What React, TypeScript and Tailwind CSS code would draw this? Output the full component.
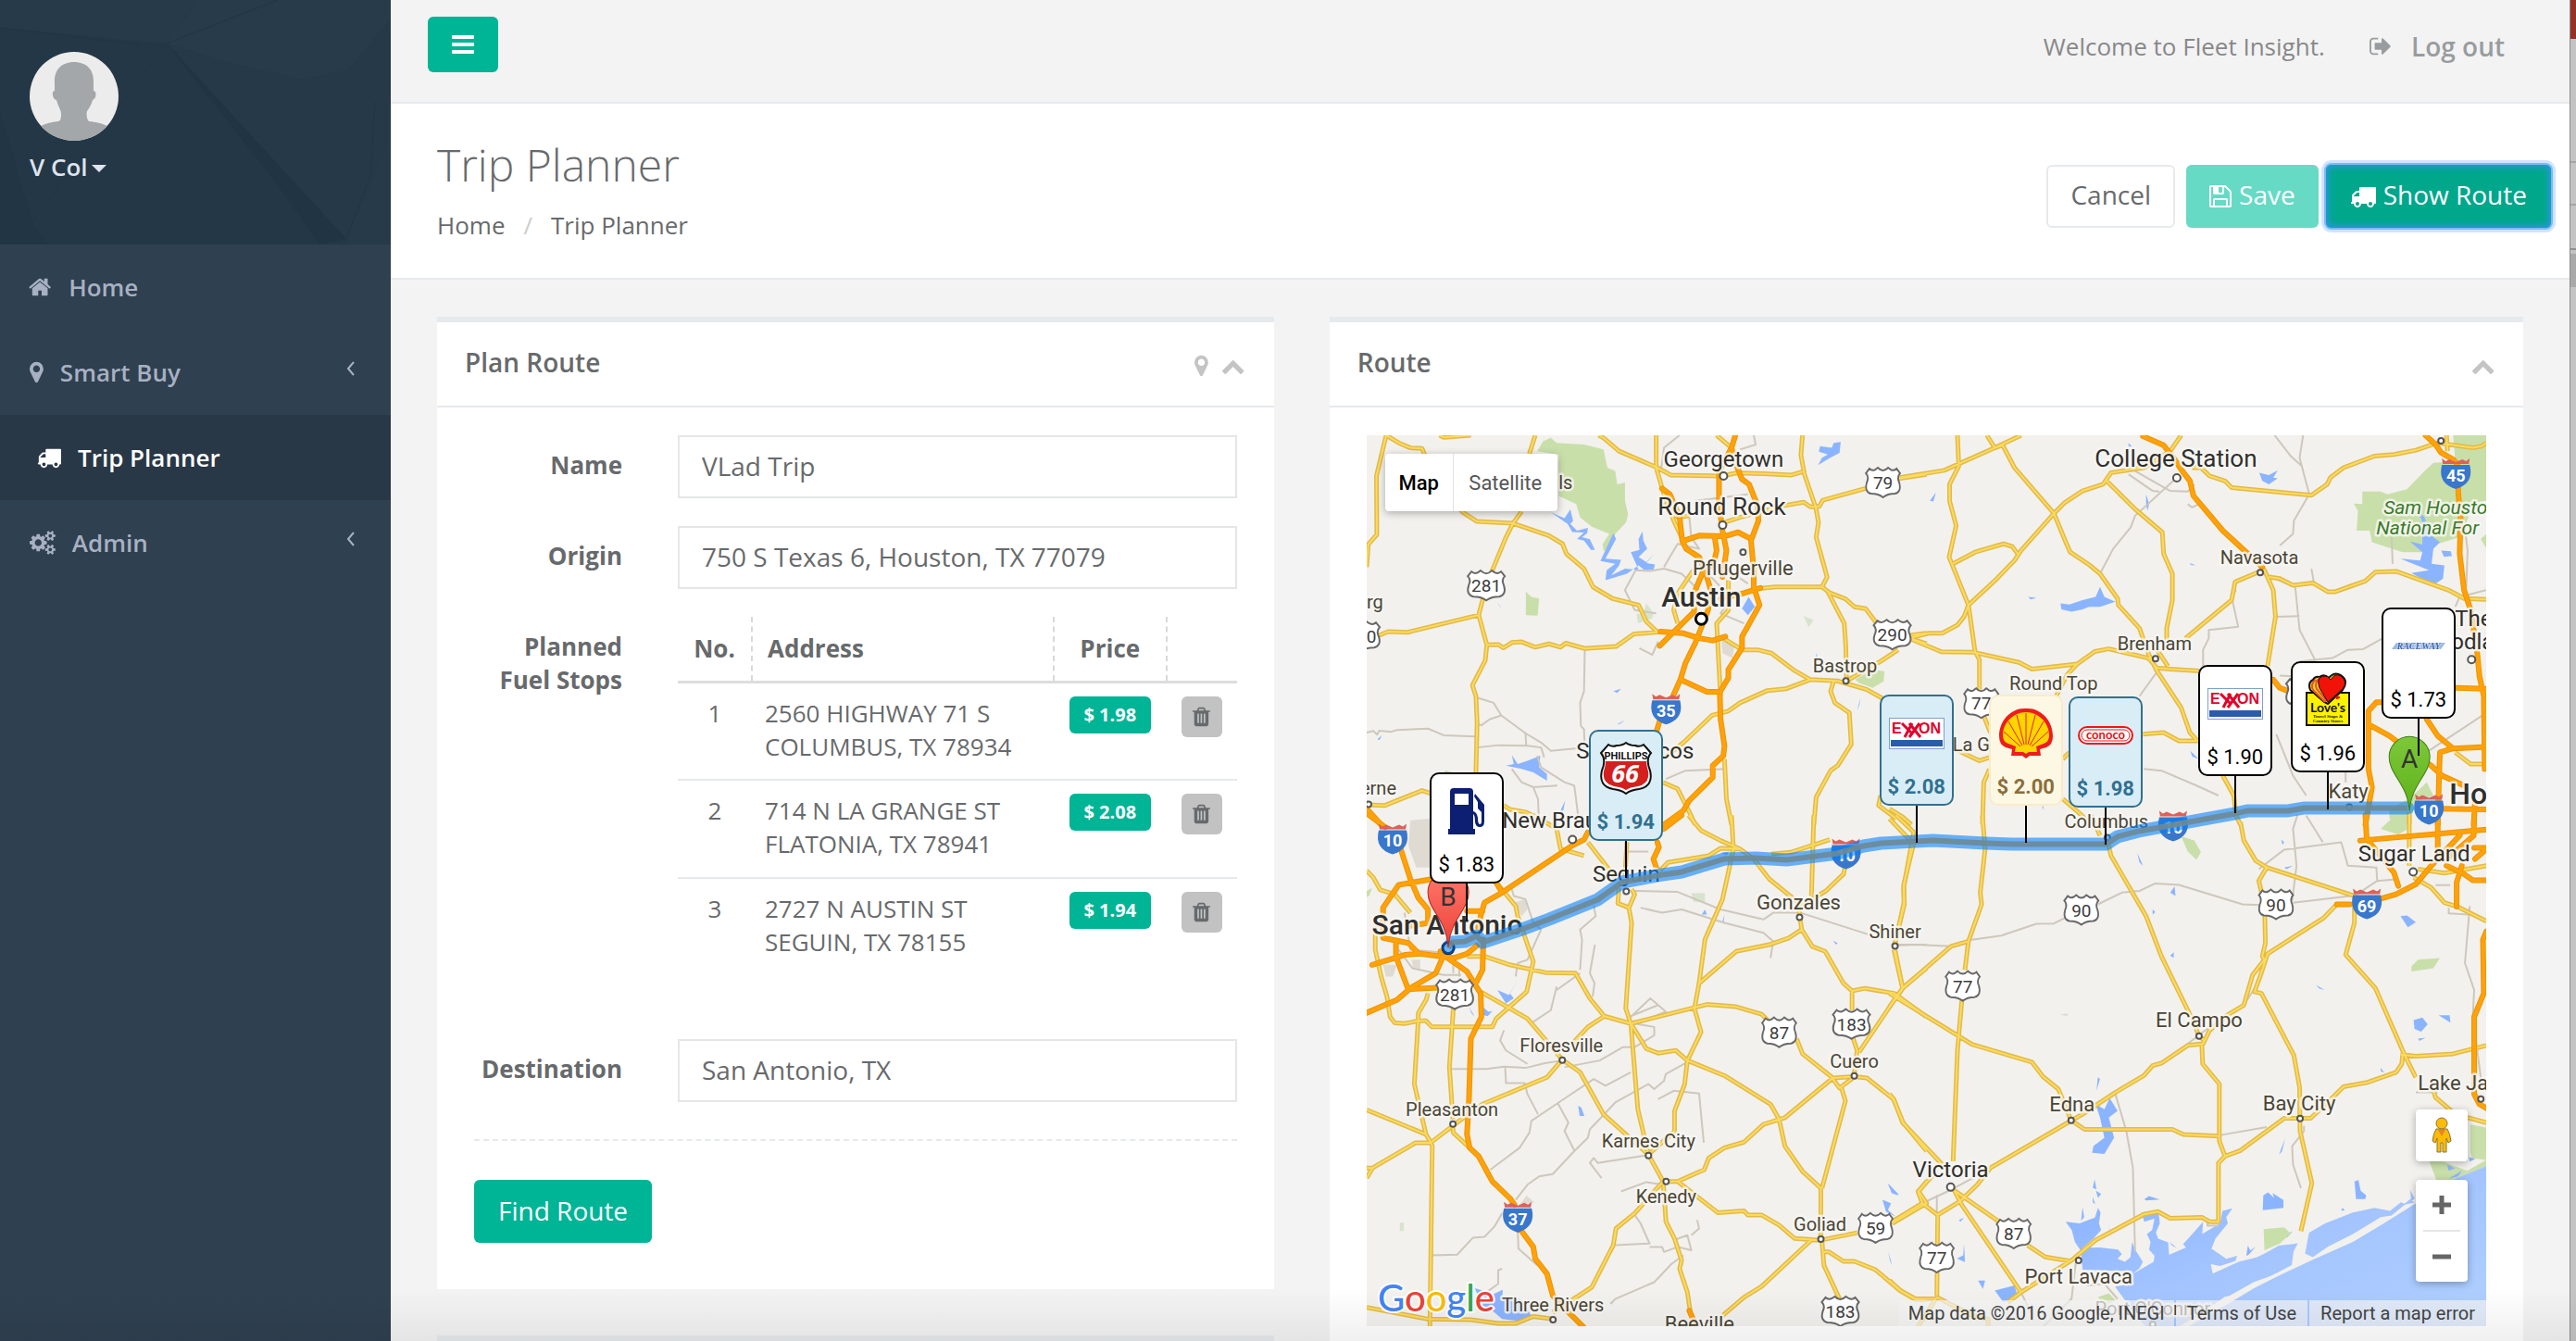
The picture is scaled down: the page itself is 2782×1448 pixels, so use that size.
import React from "react";

const icons = {
  home: {
    box: "64 0 1664 1792",
    d: "M1408 992v480q0 26-19 45t-45 19h-384v-384h-256v384h-384q-26 0-45-19t-19-45v-480q0-1 .5-3t.5-3l575-474 575 474q1 2 1 6zm223-69l-62 74q-8 9-21 11h-3q-13 0-21-7l-692-577-692 577q-12 8-24 7-13-2-21-11l-62-74q-8-10-7-23.5t11-21.5l719-599q32-26 76-26t76 26l244 204v-195q0-14 9-23t23-9h192q14 0 23 9t9 23v408l219 182q10 8 11 21.5t-7 23.5z",
  },
  marker: {
    box: "384 0 1024 1792",
    d: "M1152 640q0-106-75-181t-181-75-181 75-75 181 75 181 181 75 181-75 75-181zm256 0q0 109-33 179l-364 774q-16 33-47.5 52t-67.5 19-67.5-19-46.5-52l-365-774q-33-70-33-179 0-212 150-362t362-150 362 150 150 362z",
  },
  truck: {
    box: "0 0 1792 1792",
    d: "M640 1408q0-52-38-90t-90-38-90 38-38 90 38 90 90 38 90-38 38-90zm-384-512h384v-256h-158q-13 0-22 9l-195 195q-9 9-9 22v30zm1280 512q0-52-38-90t-90-38-90 38-38 90 38 90 90 38 90-38 38-90zm256-1088v1024q0 15-4 26.5t-13.5 18.5-16.5 11.5-23.5 6-22.5 2-25.5 0-22.5-.5q0 106-75 181t-181 75-181-75-75-181h-384q0 106-75 181t-181 75-181-75-75-181h-64q-3 0-22.5.5t-25.5 0-22.5-2-23.5-6-16.5-11.5-13.5-18.5-4-26.5q0-26 19-45t45-19v-320q0-8-.5-35t0-38 2.5-34.5 6.5-37 14-30.5 22.5-30l198-198q19-19 50.5-32t58.5-13h160v-192q0-26 19-45t45-19h1024q26 0 45 19t19 45z",
  },
  cogs: {
    box: "-64 0 1920 1792",
    d: "M832 896q0-106-75-181t-181-75-181 75-75 181 75 181 181 75 181-75 75-181zm768 512q0-52-38-90t-90-38-90 38-38 90q0 53 37.5 90.5t90.5 37.5 90.5-37.5 37.5-90.5zm0-1024q0-52-38-90t-90-38-90 38-38 90q0 53 37.5 90.5t90.5 37.5 90.5-37.5 37.5-90.5zm-384 421v185q0 10-7 19.5t-16 10.5l-155 24q-11 35-32 76 34 48 90 115 7 11 7 20 0 12-7 19-23 30-82.5 89.5t-78.5 59.5q-11 0-21-7l-115-90q-37 19-77 31-11 108-23 155-7 24-30 24h-186q-11 0-20-7.5t-10-17.5l-23-153q-34-10-75-31l-118 89q-7 7-20 7-11 0-21-8-144-133-144-160 0-9 7-19 10-14 41-53t47-61q-23-44-35-82l-152-24q-10-1-17-9.5t-7-19.5v-185q0-10 7-19.5t16-10.5l155-24q11-35 32-76-34-48-90-115-7-11-7-20 0-12 7-20 22-30 82-89t79-59q11 0 21 7l115 90q34-18 77-32 11-108 23-154 7-24 30-24h186q11 0 20 7.5t10 17.5l23 153q34 10 75 31l118-89q8-7 20-7 11 0 21 8 144 133 144 160 0 8-7 19-12 16-42 54t-45 60q23 48 34 82l152 23q10 2 17 10.5t7 19.5zm640 533v140q0 16-149 31-12 27-30 52 51 113 51 138 0 4-4 7-122 71-124 71-8 0-46-47t-52-68q-20 2-30 2t-30-2q-14 21-52 68t-46 47q-2 0-124-71-4-3-4-7 0-25 51-138-18-25-30-52-149-15-149-31v-140q0-16 149-31 13-29 30-52-51-113-51-138 0-4 4-7 4-2 35-20t59-34 30-16q8 0 46 46.5t52 67.5q20-2 30-2t30 2q51-71 92-112l6-2q4 0 124 70 4 3 4 7 0 25-51 138 17 23 30 52 149 15 149 31zm0-1024v140q0 16-149 31-12 27-30 52 51 113 51 138 0 4-4 7-122 71-124 71-8 0-46-47t-52-68q-20 2-30 2t-30-2q-14 21-52 68t-46 47q-2 0-124-71-4-3-4-7 0-25 51-138-18-25-30-52-149-15-149-31v-140q0-16 149-31 13-29 30-52-51-113-51-138 0-4 4-7 4-2 35-20t59-34 30-16q8 0 46 46.5t52 67.5q20-2 30-2t30 2q51-71 92-112l6-2q4 0 124 70 4 3 4 7 0 25-51 138 17 23 30 52 149 15 149 31z",
  },
  save: {
    box: "128 0 1536 1792",
    d: "M512 1536h768v-384h-768v384zm896 0h128v-896q0-14-10-38.5t-20-34.5l-281-281q-10-10-34-20t-39-10v416q0 40-28 68t-68 28h-576q-40 0-68-28t-28-68v-416h-128v1280h128v-416q0-40 28-68t68-28h832q40 0 68 28t28 68v416zm-384-928v-320q0-13-9.5-22.5t-22.5-9.5h-192q-13 0-22.5 9.5t-9.5 22.5v320q0 13 9.5 22.5t22.5 9.5h192q13 0 22.5-9.5t9.5-22.5zm640 32v928q0 40-28 68t-68 28h-1344q-40 0-68-28t-28-68v-1344q0-40 28-68t68-28h928q40 0 88 20t76 48l280 280q28 28 48 76t20 88z",
  },
  signOut: {
    box: "64 0 1600 1792",
    d: "M704 1440q0 4 1 20t.5 26.5-3 23.5-10 19.5-20.5 6.5h-320q-119 0-203.5-84.5t-84.5-203.5v-704q0-119 84.5-203.5t203.5-84.5h320q13 0 22.5 9.5t9.5 22.5q0 4 1 20t.5 26.5-3 23.5-10 19.5-20.5 6.5h-320q-66 0-113 47t-47 113v704q0 66 47 113t113 47h312l11.5 1 11.5 3 8 5.5 7 9 2 13.5zm928-544q0 26-19 45l-544 544q-19 19-45 19t-45-19-19-45v-288h-448q-26 0-45-19t-19-45v-384q0-26 19-45t45-19h448v-288q0-26 19-45t45-19 45 19l544 544q19 19 19 45z",
  },
  trash: {
    box: "192 0 1408 1792",
    d: "M704 1376v-704q0-14-9-23t-23-9h-64q-14 0-23 9t-9 23v704q0 14 9 23t23 9h64q14 0 23-9t9-23zm256 0v-704q0-14-9-23t-23-9h-64q-14 0-23 9t-9 23v704q0 14 9 23t23 9h64q14 0 23-9t9-23zm256 0v-704q0-14-9-23t-23-9h-64q-14 0-23 9t-9 23v704q0 14 9 23t23 9h64q14 0 23-9t9-23zm-544-992h448l-48-117q-7-9-17-11h-317q-10 2-17 11zm928 32v64q0 14-9 23t-23 9h-96v948q0 83-47 143.5t-113 60.5h-832q-66 0-113-58.5t-47-141.5v-952h-96q-14 0-23-9t-9-23v-64q0-14 9-23t23-9h309l70-167q15-37 54-63t79-26h320q40 0 79 26t54 63l70 167h309q14 0 23 9t9 23z",
  },
  chevronUp: {
    box: "90 0 1612 1792",
    d: "M1683 1331l-166 165q-19 19-45 19t-45-19l-531-531-531 531q-19 19-45 19t-45-19l-166-165q-19-19-19-45.5t19-45.5l742-741q19-19 45-19t45 19l742 741q19 19 19 45.5t-19 45.5z",
  },
  bars: {
    box: "128 0 1536 1792",
    d: "M192 1280h1408q64 0 64 64v128q0 64-64 64h-1408q-64 0-64-64v-128q0-64 64-64zM192 768h1408q64 0 64 64v128q0 64-64 64h-1408q-64 0-64-64v-128q0-64 64-64zM192 256h1408q64 0 64 64v128q0 64-64 64h-1408q-64 0-64-64v-128q0-64 64-64z",
  },
};

type IconName = keyof typeof icons;

const Icon = ({ name, className = "h-[26px]" }: { name: IconName; className?: string }) => (
  <svg viewBox={icons[name].box} fill="currentColor" aria-hidden="true" className={`w-auto shrink-0 overflow-visible ${className}`}>
    <path d={icons[name].d} />
  </svg>
);

/* ---------------------------------------------------------------- sidebar */

const menu: { label: string; icon: IconName; active?: boolean; children?: boolean }[] = [
  { label: "Home", icon: "home" },
  { label: "Smart Buy", icon: "marker", children: true },
  { label: "Trip Planner", icon: "truck", active: true },
  { label: "Admin", icon: "cogs", children: true },
];

const Sidebar = () => (
  <aside className="w-[422px] shrink-0 bg-[#2f4050]">
    <div className="relative h-[264px] overflow-hidden bg-[#243746] px-8 pt-14">
      <svg viewBox="0 0 422 264" preserveAspectRatio="none" aria-hidden="true" className="absolute inset-0 h-full w-full">
        <path d="M0 0H215L180 47L0 30Z" fill="#273a49" />
        <path d="M215 0H422V50L375 76L326 86L240 66L180 47Z" fill="#283b4a" />
        <path d="M180 47L240 66L326 86L375 76L422 20V180L374 258Z" fill="#263948" />
        <path d="M180 47L374 258L345 264L300 200Z" fill="#213443" />
        <path d="M374 258L422 150V264H376Z" fill="#273a49" />
        <path d="M0 120L35 240L0 246ZM35 240L52 264H0V246Z" fill="#223544" />
        <path d="M300 0L180 47L35 240M0 30L150 48M405 110L400 190L374 258" stroke="#223544" fill="none" />
      </svg>
      <div className="relative">
        <svg viewBox="0 0 96 96" role="img" aria-label="V Col" className="h-24 w-24 rounded-full bg-[#ececec]">
          <path
            d="M48 11C34 11 26 20 27 34L27 42C23 42 25 52 29 52C31 60 34 62 34 67C34 72 33 75 31 75C20 76 13 79 0 86V96H96V86C83 79 76 76 64 75C62 73 61 68 62 64C65 60 67 56 68 52C72 51 73 42 69 42L69 34C70 20 62 11 48 11Z"
            fill="#a3a7a9"
          />
        </svg>
        <button type="button" className="mt-2 flex items-center gap-1 text-[26px] leading-[40px] font-semibold text-[#dfe4ed]">
          V Col
          <svg viewBox="0 0 16 8" aria-hidden="true" className="mt-1 h-2 w-4">
            <path d="M0 0H16L8 8Z" fill="currentColor" />
          </svg>
        </button>
      </div>
    </div>
    <nav>
      <ul>
        {menu.map((item) => (
          <li key={item.label}>
            <a
              href="#"
              className={
                item.active
                  ? "flex h-[92px] items-center gap-[18px] bg-[#293846] pr-10 pl-10 text-[26px] font-semibold text-white"
                  : "flex h-[92px] items-center gap-[18px] pr-[38px] pl-8 text-[26px] font-semibold text-[#a7b1c2]"
              }
            >
              <Icon name={item.icon} />
              {item.label}
              {item.children && (
                <svg viewBox="0 0 10 16" aria-hidden="true" className="mb-2 ml-auto h-4 w-[10px]">
                  <path d="M8 1L2 8L8 15" fill="none" stroke="currentColor" strokeWidth="2" />
                </svg>
              )}
            </a>
          </li>
        ))}
      </ul>
    </nav>
  </aside>
);

/* ------------------------------------------------------------ page header */

const TopBar = () => (
  <header className="flex h-28 items-start justify-between border-b-2 border-[#e7eaec] pr-[70px] pl-10">
    <button type="button" aria-label="Toggle menu" className="mt-[18px] flex h-[60px] w-[76px] items-center justify-center rounded-md bg-[#00b496] text-white">
      <Icon name="bars" className="h-7" />
    </button>
    <div className="flex h-[100px] items-center text-[26px]">
      <span className="text-[#888888]">Welcome to Fleet Insight.</span>
      <a href="#" className="ml-12 flex items-center gap-[22px] font-semibold text-[#999c9e]">
        <Icon name="signOut" />
        <span className="text-[28px]">Log out</span>
      </a>
    </div>
  </header>
);

const PageHeading = () => (
  <div className="flex h-[190px] items-center justify-between border-b-2 border-[#e7eaec] bg-white pr-5 pl-[50px]">
    <div>
      <h1 className="text-[48px] leading-[54px] font-light">Trip Planner</h1>
      <nav aria-label="Breadcrumb" className="mt-5 text-[26px] leading-9">
        <a href="#">Home</a>
        <span className="px-5 text-[#cccccc]">/</span>
        <a href="#">Trip Planner</a>
      </nav>
    </div>
    <div className="mt-3 flex items-center text-[28px]">
      <button type="button" className="h-[68px] rounded-md border-2 border-[#e7eaec] bg-white px-6 pb-1">
        Cancel
      </button>
      <button type="button" className="ml-3 flex h-[68px] items-center gap-2 rounded-md bg-[#66dac4] px-[25px] pb-1 text-white">
        <Icon name="save" className="mt-1 h-7" />
        Save
      </button>
      <button
        type="button"
        className="ml-2 flex h-[68px] items-center gap-2 rounded-md bg-[#00a78b] px-[26px] pb-1 text-white shadow-[0_0_0_2px_#7db8fb,0_0_0_5px_#cfe4fd,inset_0_0_6px_3px_#2698d6]"
      >
        <Icon name="truck" className="mt-1 h-7" />
        Show Route
      </button>
    </div>
  </div>
);

/* ------------------------------------------------------------- plan route */

const stops = [
  { street: "2560 HIGHWAY 71 S", city: "COLUMBUS, TX 78934", price: "$ 1.98" },
  { street: "714 N LA GRANGE ST", city: "FLATONIA, TX 78941", price: "$ 2.08" },
  { street: "2727 N AUSTIN ST", city: "SEGUIN, TX 78155", price: "$ 1.94" },
];

const FormField = ({ id, label, value }: { id: string; label: string; value: string }) => (
  <div className="flex h-[68px]">
    <label htmlFor={id} className="w-[200px] pt-[14px] pr-10 text-right font-bold">
      {label}
    </label>
    <input id={id} type="text" defaultValue={value} className="ml-5 min-w-0 flex-1 border-2 border-[#e5e6e7] bg-white px-6 pb-[2px] text-[28px] outline-none" />
  </div>
);

const PlanRoute = () => (
  <section className="border-t-[6px] border-[#e7eaec] bg-white">
    <div className="flex h-[92px] items-center justify-between border-b-2 border-[#e7eaec] pr-8 pb-1 pl-[30px]">
      <h2 className="text-[28px] font-semibold">Plan Route</h2>
      <div className="flex items-center gap-4 pt-2 text-[#c4c4c4]">
        <button type="button" aria-label="Locate">
          <Icon name="marker" />
        </button>
        <button type="button" aria-label="Collapse Plan Route">
          <Icon name="chevronUp" />
        </button>
      </div>
    </div>
    <form className="px-10 pt-[30px] pb-[50px] text-[26px] leading-9" onSubmit={(e) => e.preventDefault()}>
      <div className="flex flex-col gap-[30px]">
        <FormField id="name" label="Name" value="VLad Trip" />
        <FormField id="origin" label="Origin" value="750 S Texas 6, Houston, TX 77079" />
        <div className="flex">
          <div id="stops" className="w-[200px] pt-[14px] pr-10 text-right font-bold">
            Planned
            <br />
            Fuel Stops
          </div>
          <table aria-labelledby="stops" className="mb-[38px] ml-5 flex-1 table-fixed">
            <thead>
              <tr className="h-[70px] border-b-[3px] border-[#dddddd] text-left">
                <th className="w-20 border-r-2 border-dashed border-r-[#d9d9d9] text-center">No.</th>
                <th className="border-r-2 border-dashed border-r-[#d9d9d9] pl-4">Address</th>
                <th className="w-[122px] border-r-2 border-dashed border-r-[#d9d9d9] text-center">Price</th>
                <th className="w-[76px]" aria-label="Actions" />
              </tr>
            </thead>
            <tbody>
              {stops.map((stop, index) => (
                <tr key={stop.city} className="h-[106px] border-b-2 border-[#e7eaec] align-top last:border-b-0">
                  <td className="pt-[14px] text-center">{index + 1}</td>
                  <td className="pt-[14px] pl-[14px]">
                    {stop.street}
                    <br />
                    {stop.city}
                  </td>
                  <td className="pt-[14px]">
                    <span className="mx-auto block h-10 w-[88px] rounded-md bg-[#00b496] text-center text-[20px] leading-10 font-bold text-white">{stop.price}</span>
                  </td>
                  <td className="pt-[14px]">
                    <button type="button" aria-label={`Remove stop ${index + 1}`} className="mx-auto flex h-11 w-11 items-center justify-center rounded-md bg-[#c2c2c2] text-[#676a6c]">
                      <Icon name="trash" className="h-6" />
                    </button>
                  </td>
                </tr>
              ))}
            </tbody>
          </table>
        </div>
        <FormField id="destination" label="Destination" value="San Antonio, TX" />
      </div>
      <hr className="mt-10 mb-[42px] border-t-2 border-dashed border-[#e7eaec]" />
      <button type="submit" className="h-[68px] rounded-md bg-[#00b496] px-[26px] pb-[2px] text-[28px] text-white">
        Find Route
      </button>
    </form>
  </section>
);

/* -------------------------------------------------------------------- map */

// The base map is cut in four tiles, each drawn in its own coordinates.
const tiles = [
  {
    transform: "translate(-56 -140) scale(.42092 .35714)",
    park: "M570 440L585 410L605 400L620 415L690 420L740 435L750 490L770 500L775 540L795 535L795 590L803 630L798 655L770 690L765 720L740 742L738 720L755 690L710 668L680 640L670 600L625 575L625 450ZM541 864L555 880L575 885L571 937L541 935ZM1385 1130L1430 1100L1460 1105L1458 1135L1430 1155L1395 1140ZM330 1412L335 1404L352 1410Z",
    soft: "M1253 938L1278 950L1266 972ZM825 930L840 935L850 900L868 930L865 945L828 960Z",
    town: "M1042 1010L1075 1030L1070 1065L1045 1050Z",
    water:
      "M1295 425L1325 430L1330 415L1348 412L1345 445L1318 462L1290 482L1300 460L1315 450L1292 442ZM505 1358L520 1385L545 1375L578 1360L575 1395L595 1415L595 1435L560 1410L530 1400L490 1390L510 1385ZM1095 915L1112 880L1128 910L1110 935ZM605 625L640 642L655 616L662 650L655 660L672 680L700 672L698 688L685 700L705 706L718 738L708 738L690 710L672 705L690 686L660 684L648 660L636 650ZM765 688L772 705L745 765L785 768L780 785L760 815L795 795L830 798L810 745L832 738L830 705L840 682L842 710L852 735L830 760L850 775L870 750L850 778L872 782L868 798L845 800L830 785L800 810L745 830L748 800L770 780L732 772ZM765 1165L785 1158L775 1170ZM775 1265L795 1252L782 1264ZM628 1530L642 1495L636 1530ZM1390 1225L1398 1185L1396 1205ZM160 1310L172 1298L166 1312ZM468 895L478 915L472 905ZM1286 1050L1290 1070L1284 1065Z",
    minor:
      "M133 1290L150 1285L160 1296L165 1284L195 1288L210 1282L290 1278L330 1298L413 1302M418 1185L458 1200L478 1238L448 1250L427 1268L420 1265M478 1238L540 1292L580 1320L605 1345L692 1335M418 1335L470 1328L545 1330L580 1335L588 1365M540 1292L542 1330M692 1040L690 1165L680 1200L682 1270L690 1280L692 1340M570 1360L580 1395L640 1440L665 1450L678 1568M505 1400L530 1440L560 1455L622 1450M560 1455L572 1490L575 1568M935 392L895 430L888 490M960 640L965 700L985 735L930 720L895 790M895 795L860 802L822 800L795 860L820 920L875 930M895 795L940 810L985 860M1125 392L1130 420L1090 435M832 1035L865 1055L880 1015M900 1430L950 1405L1055 1400M1040 850L1000 800L960 740M1080 860L1040 930L1100 960M975 590L1110 570M1060 800L1110 840",
    road: "M183 392L158 515L159 692L137 722L133 790M183 392L215 415L245 430L275 432L285 460M320 392L330 398L400 392M330 560L380 625L415 652L508 658L600 695L635 720L645 750L690 795L713 850L763 885L830 905L850 955L880 988M565 392L550 448M530 622L508 658L490 700L455 800L430 890L420 935L441 1025L437 1072L404 1147L413 1180L416 1260L413 1412M133 1012L188 985L238 987L420 935M441 1025L470 1024L484 1034L505 1018L530 1016L565 1032L600 1022L630 1032L643 1020L692 1036L772 1030L818 992L888 986M728 392L740 400L780 440L878 490L912 512L1045 515L1080 506L1150 508L1222 512L1250 502M1250 392L1246 452L1255 510L1284 610L1291 655L1285 700L1313 820L1300 850M875 392L875 490L895 570L920 650L940 700M1568 510L1500 522L1410 553L1302 588L1293 607L1270 608L1253 594L1200 605L1090 640L1050 655M1140 855L1180 850L1300 850L1320 868L1360 886L1383 910L1412 916L1440 960M1315 865L1357 960L1361 1030L1363 1130M1040 1000L1095 1040L1135 1040L1170 1050L1230 1103L1270 1130L1340 1134L1415 1160L1460 1190M1270 1130L1207 1158L1160 1163L1090 1200L1060 1225L1018 1238L945 1320L892 1370M1568 990L1500 1000M1495 1040L1450 1075L1363 1134M1525 1005L1568 1022M1330 1134L1322 1165L1333 1200L1370 1230L1375 1325L1340 1390L1322 1405L1285 1485L1279 1568M1050 1370L1055 1490L1068 1568M1040 1180L1035 1070L1030 960L1060 920L1060 830M970 800L930 870L920 920L930 960M1030 392L1068 430M133 1508L180 1510L275 1465L300 1475M484 1510L500 1522L540 1530L590 1560M892 1440L930 1460L960 1530L975 1568M1450 1480L1445 1510L1490 1550M890 600L930 640L960 635",
    highway:
      "M1078 392L1068 430L1080 480L1095 525L1113 540L1135 605L1137 650L1118 710L1125 800L1125 850L1140 905L1095 1000L1095 1035L1060 1100L1060 1125L1038 1168L1040 1250L1050 1330L1047 1360L1020 1390L1020 1425L960 1495L945 1525L895 1568M1068 430L1036 500L1036 600L1045 680L1055 740L1045 820M890 553L910 570L935 640L942 712L985 695L1050 697L1085 685L1118 705M942 712L952 735L985 760L1000 800L1015 860L1008 920L975 1020L950 1080L937 1130L918 1180M1025 700L1030 740L1020 790M1000 790L975 860L972 925L884 1028M886 985L945 990L985 1005L1020 1012L1052 1000M937 1130L1005 1167L1038 1167M885 1250L875 1290M1142 853L1090 872L1040 885M133 1520L170 1568",
  },
  {
    transform: "translate(564 -140) scale(.47321 .35714)",
    park: "M1058 598L1078 600L1078 562L1120 562L1135 570L1180 555L1220 500L1240 475L1290 470L1285 392L1361 392L1361 590L1310 600L1320 640L1300 700L1250 720L1230 745L1170 745L1100 715L1095 680L1065 680L1068 620ZM1361 690L1348 705L1361 735ZM1140 1520L1185 1490L1225 1440L1240 1480L1200 1500L1185 1568L1140 1550Z",
    soft: "",
    town: "",
    water:
      "M390 900L410 903L440 890L470 880L480 850L490 880L515 895L480 910L455 910L440 918L415 925L392 918ZM843 505L865 512L885 498L875 520L885 522L865 540L850 530ZM1186 712L1215 722L1214 650L1205 620L1220 640L1230 690L1240 700L1255 715L1240 735L1236 780L1265 785L1262 825L1240 845L1190 808L1230 800L1165 765L1210 770L1215 745ZM1258 740L1280 742L1282 757L1264 759ZM92 590L106 565L100 592ZM585 570L592 600L588 620L585 600ZM316 880L335 883L322 888ZM684 778L698 784L688 784ZM545 415L553 427L545 425ZM686 1345L705 1370L690 1362ZM350 1510L352 1525L348 1515Z",
    minor:
      "M878 392L915 455L940 485L957 570L922 650L920 690L890 725M943 392L935 460L940 485M655 520L560 635L550 670L510 735L480 810M545 510L600 560L615 562M560 500L640 560L680 562L695 540M680 600L690 610L705 600M790 860L780 880L795 970L728 980L728 1005L715 1040L715 1090M850 810L925 850L935 980L970 1070L960 1100M880 940L935 938M935 1075L1010 1065L1045 1040L1080 1038L1125 1005M962 795L968 840M1145 700L1147 780M1290 910L1300 880L1360 860M1230 1345L1361 1230M580 1400L620 1405L700 1450L750 1480M608 1110L570 1180M890 1118L920 1120M1310 650L1318 740L1315 850M882 1295L920 1420L950 1480M1040 1440L1040 1370L1060 1330",
    road: "M155 392L158 485L137 540L137 590L152 665L136 760L180 905L195 1045L205 1070L205 1160M0 525L125 498L240 430L300 392M222 392L240 430L258 422L285 490L375 628L402 715L412 745L455 783L480 810L520 885L522 905L570 975L590 1050L608 1100L665 1215L685 1290L700 1312M665 392L640 440L580 490L505 505L487 540L440 560L400 595L375 628L300 740L285 770L245 825L180 905L170 940L155 965L120 990L90 990L50 1003M145 780L195 745L260 720L280 728L295 755M495 530L560 615L622 685L625 750L645 810L645 890L632 975L632 1010M50 1008L118 1046L190 1047L295 1078L325 1098L428 1083L468 1045L500 1037L590 1065L610 1095L640 1098L707 1104M428 1083L405 1115L380 1180M610 1040L635 1090M675 1005L780 890L788 835L845 803M845 790L855 800L875 860L880 940L862 1088M865 820L890 825L920 845L965 838L1000 865L1015 865L1085 832L1108 805L1155 803L1275 860L1310 885L1361 888M690 490L710 490L730 515L765 530L780 550L962 573L998 540L1005 520L1035 490L1105 455L1150 450L1200 437L1250 415L1330 430L1350 425L1361 415M215 1240L230 1290M150 1340L205 1375L228 1365M578 1295L625 1290L660 1315L705 1315M395 1490L430 1530L460 1568M228 1400L215 1440L212 1568M760 1420L785 1480L790 1540L800 1568M410 1350L395 1370M1361 1385L1325 1385L1290 1350M0 1520L30 1545L50 1568M1185 1530L1185 1568M1270 392L1272 440",
    highway:
      "M578 395L625 422L650 465L665 495L685 530L693 575L760 680L850 790M1222 392L1245 420L1258 445L1285 465L1295 480L1297 570L1302 640L1300 750L1310 860L1325 920L1340 1050L1345 1120L1355 1180L1357 1400M875 1130L890 1155L910 1165M1125 1198L1110 1198L1092 1225L1092 1400L1100 1455L1085 1568M1092 1265L1140 1300L1180 1340L1235 1390L1260 1420L1310 1450M1292 1155L1361 1158M1225 1250L1250 1300L1285 1338L1361 1333M1285 1338L1255 1350L1253 1420L1250 1568M1260 1520L1361 1522M1335 1500L1332 1568",
  },
  {
    transform: "translate(-56 410) scale(.42092 .36224)",
    park: "M133 225L147 217L139 240L133 243Z",
    soft: "M965 232H1000V260L970 257ZM218 1213H228V1238H218Z",
    town: "M245 15L297 10V155H260L240 90ZM510 260L540 250L545 280L530 300ZM248 430H270V458L252 453ZM175 445H210L200 480H182ZM525 1160L543 1132L563 1152Z",
    water:
      "M520 490L500 530L510 545L490 560L468 520L498 535ZM430 570L445 585L455 583L443 598L425 593ZM395 570L410 600L402 590ZM410 1408L430 1415L440 1430L455 1450L450 1430L482 1412L480 1440L525 1440L545 1470L555 1490L520 1505L480 1500L460 1480L430 1460ZM1468 1095L1498 1130L1478 1122ZM1455 1145L1477 1155L1469 1175L1489 1195L1464 1180ZM1470 1300L1480 1340L1474 1325ZM675 865L683 870L691 895L679 895ZM992 295L1000 280L1005 295ZM1045 315L1050 295L1048 318ZM1328 373L1340 380L1336 385ZM1040 112L1062 108L1056 118Z",
    minor:
      "M340 755L440 755L485 748L540 752L590 738L634 730M488 752L490 797L538 797L545 830L572 890M622 855L650 915L640 940L665 998M450 1055L525 990L550 945L555 910L625 855L715 785L745 805L810 765M515 1145L545 1100L575 1075L610 1068L665 1000L700 960L705 935L770 855L855 800L870 815L895 790L900 770L955 735M485 640L475 670L490 700L545 740M480 1185L460 1225L435 1255L405 1258L365 1308L300 1310M520 1235L522 1290L570 1340M735 1080L705 1035L715 1020L725 1035L850 1012M785 1120L850 1092L893 1100M820 1190L835 1215L858 1275L770 1280M858 1285L890 1285L895 1300L930 1285L965 1295L955 1250L920 1265M965 1250L985 1230L980 1205M880 845L920 820L985 828L997 975M758 1455L770 1440L870 1390L915 1335L945 1310M715 270L720 300L680 340L685 370L680 460M718 385L705 470L717 500L712 540M820 225L930 228L1040 280L1150 310L1175 290L1240 290M835 275L890 290L940 280L1050 320L1150 350L1175 375L1168 425M1245 290L1420 355M1490 385L1568 385M620 510L605 580L560 615M680 470L620 520M505 220L510 240L540 250L560 320L580 340L545 430L520 440L515 480M215 400L250 455L330 475L375 475M230 290L245 400L340 410M810 600L860 545L900 585L820 620M805 600L880 565M820 620L870 630L870 655L820 690L790 690L730 730L640 750M480 1350L470 1355L470 1395L440 1420M800 108H855M355 470V415M370 480V440",
    road: "M133 165L150 185L168 222L205 235L245 290M155 330L155 400L170 480L185 540L193 600L205 618L230 620L265 612L285 612L300 630L455 630L465 605L543 525L560 435L520 300L515 270L465 200M265 612L255 800L275 900L285 950L298 975L301 985L295 1523M290 530L285 550L265 590L265 612M355 575L345 750L354 905M390 420L435 420L500 445L590 468L668 470L705 545L742 598L810 620L1005 563L1080 570L1145 592L1165 615M425 525L500 575L545 605L600 680L634 727L680 765L740 890L855 1010L893 1090M742 598L700 630L660 680M634 727L595 780L430 860L370 910L300 972M133 877L285 950M133 1080L148 1050L258 975L298 975M133 1050L148 1050M354 930L355 945L395 988M560 0L620 40L630 100L690 120M700 80L760 170L780 200L777 262L805 275L812 320L797 575L810 620L828 875L855 1010M812 220L820 235L805 275M800 80L795 180M810 620L850 695L880 708L925 700L955 730L1050 775L1168 860L1190 905L1205 985L1250 1060L1297 1110V1262M1068 0L1073 100L1045 250L1000 370L985 500L973 575L990 645L955 730L948 800L922 880V940L855 1010M958 0L990 45L1040 75L1090 100L1125 130L1165 190L1240 260L1243 303M880 170L905 140L1010 120L1040 98L1090 100M1170 115L1220 110L1320 72M1279 0L1273 240M1360 150L1355 175L1310 225L1245 270M1243 303L1248 340L1215 365L1165 385L1080 405L985 500M1248 340L1275 390L1308 405L1355 500L1377 523V580M1377 523L1410 515L1485 530L1568 600M1505 515L1568 455M1487 400L1507 515L1485 550L1395 705M1490 0L1535 50L1510 210V260L1487 385M1380 665L1390 700L1382 775M1235 665L1250 710L1328 782L1382 778L1415 782L1483 845L1508 915L1568 1000M1328 782L1205 900L1150 920L1100 973L1050 990L1010 1020L998 1055L930 1090L900 1090M1328 785L1345 812L1382 780M1350 812L1360 850L1300 1110M893 1090L820 1185L772 1230L765 1280L710 1405L610 1480M930 1090L1033 1183L1100 1178L1110 1190L1145 1190L1190 1220L1230 1260L1297 1265L1390 1243M1480 1215L1568 1155L1548 1120L1568 1090M893 1090L900 1210L922 1260L940 1325L935 1350L955 1420L962 1475M1275 1262L1145 1403L1100 1435L1045 1490M1300 1268L1305 1340L1345 1440M1303 1300L1318 1300L1355 1328L1383 1328L1437 1353L1500 1415L1540 1442H1568M133 1465L200 1480L290 1500L400 1502L470 1513H515L560 1492L610 1500",
    highway:
      "M140 0L180 35M220 100L245 190L265 245L290 280V320L240 330M300 190L215 207L175 275V365L240 380L265 410M700 50L690 72L660 90L480 230L435 260L425 300L415 350M480 230L465 200M390 285H430M208 378V420L240 520L210 550L133 588M147 445L232 415L270 412L355 425L390 412L415 388M240 518L310 470L325 430L322 405M240 518L315 513M335 420L390 465L425 530L427 600L400 665L395 850L390 950L397 990L420 1015L455 1090L500 1140L512 1160M528 1235L560 1285L565 1320L595 1365L610 1430L655 1485L688 1523M432 370L430 460L415 495M878 80L882 95L868 130L875 155L878 175M895 40L940 0M960 1475L978 1523",
  },
  {
    transform: "translate(564 410) scale(.47321 .36224)",
    park: "M665 62L695 75L710 110L700 132L680 108ZM1190 450L1205 430L1255 425L1240 455L1190 465ZM853 1232L900 1227L915 1245L890 1275L855 1295ZM475 1435L500 1423L515 1443L495 1463ZM1120 40L1150 2H1180V42L1160 57Z",
    soft: "",
    town: "M388 594L408 590L405 597Z",
    water:
      "M470 860L490 875L502 842L520 880L500 900L512 960L490 1008L462 1005L465 985L490 960L480 900ZM475 780L480 785L472 820ZM240 1415L285 1400L292 1430L260 1450ZM1195 610L1215 602L1227 622L1212 644L1197 636ZM1252 595H1277L1279 617ZM1165 300L1180 298L1200 318L1182 333ZM202 1385H218L213 1410ZM640 230L650 212L652 240ZM565 112L578 150L570 140ZM600 280L606 288L600 295ZM640 418L648 408L648 424ZM972 505L992 520L980 516ZM888 1010L902 962L895 1000ZM1205 665L1222 662L1208 672ZM1120 752L1128 766L1120 762ZM0 1100L20 1132L5 1125ZM158 1205L170 1198L162 1210ZM170 1275L172 1330L154 1320L168 1310ZM893 72L900 80L896 88ZM900 155L920 150L905 160Z",
    minor:
      "M12 388L60 385L140 390M180 372L255 358L335 323L375 322L400 305M475 265L530 230L570 225L605 203L660 207L805 265L845 267M920 260L1050 240M930 0L920 40L928 150L918 255M842 160L900 102L1030 80L1045 150L1110 155L1112 195L1160 190M1112 195L1060 240M950 0L988 80M1323 270L1312 440L1333 520L1330 600L1350 800M1275 275V292L1320 295M1245 208H1278M515 830L540 940L555 1050L560 1300M755 952L860 928M945 925V940L918 985L920 1040L938 1110M140 1115L190 1080M75 1155L140 1115M108 1130V1190M425 1330L415 1440L350 1523M300 1420L322 1480M725 1210V1222H750M680 680L740 620M830 520L808 565M1200 825H1250M450 1400L490 1395L520 1440",
    road: "M500 90L505 120L585 300L620 420L695 620L705 657L720 672M800 20L808 75L835 135L860 155L1060 240M860 155L842 195L855 265L857 380L850 420L855 430L828 475L808 565L770 595L730 640L715 680L680 685L620 738L600 745L580 775L515 825L440 890L400 920L230 1050M1020 265L990 305L862 412L845 480L832 525L848 530L922 715L935 810L936 940L963 1095L938 1238M1060 270V320L1040 415L1108 515L1175 715L1200 780M1165 712L1200 717L1285 710L1361 685M1170 712L1168 740L1155 765L1090 795L1035 808L995 860L960 902H900L800 998L765 1015L750 1035V1210H730L712 1197L640 1200L612 1180L580 1188L470 1265L415 1325L300 1420L270 1450M765 1015L752 970V800L714 740L712 680M414 908L445 935H645L670 950L752 955M414 908L385 815L350 778L325 735L188 682L0 530M212 0L218 100L207 230L210 265L180 375L172 460M165 550L155 700L145 1030M180 375L140 390L30 515L0 570M10 400L30 515M0 10L55 85L32 210L34 265L12 380M0 830L10 845L30 915L135 1060M140 1110L250 1210M315 1280L355 1315L415 1328M145 1110L165 1160L300 1420M110 1190L108 1430M110 1190L160 1150L200 1100L230 1050M110 1190L75 1155L0 1215M75 1155L65 1120L100 1070M0 1385L25 1415L60 1440H105M65 1523L108 1435L190 1490L225 1500V1523M1240 820L1245 840L1290 890L1361 915M1195 185L1235 215L1265 260L1295 272L1361 315M1185 0V150M1205 160L1265 172L1361 150M460 0L480 60",
    highway:
      "M1085 0L1088 70L1150 170L1160 210M1073 75L1361 42M1020 265H1050M1120 248L1155 235L1200 205L1235 150L1300 60M1250 0V130M1333 0L1332 60L1270 130M1270 150L1310 175L1330 193H1361M1305 150L1293 200V272M1333 97H1361M1335 130L1361 100M1361 345L1353 370L1355 530L1333 600V830L1345 860L1361 872",
  },
];

interface Place {
  name: string;
  x: number;
  y: number;
  size: number;
  anchor?: "start" | "middle" | "end";
  dot?: [number, number, number];
  bold?: boolean;
}

const places: Place[] = [
  { name: "Georgetown", x: 385, y: 34, size: 24, dot: [385, 44, 4] },
  { name: "Round Rock", x: 383, y: 86, size: 26, dot: [384, 97, 4] },
  { name: "Pflugerville", x: 406, y: 151, size: 22, dot: [406, 126, 3] },
  { name: "Austin", x: 361, y: 185, size: 30, bold: true, dot: [361, 198, 6] },
  { name: "Bastrop", x: 516, y: 256, size: 20, dot: [517, 265, 3] },
  { name: "rg", x: 0, y: 187, size: 20, anchor: "start" },
  { name: "ls", x: 207, y: 58, size: 20, anchor: "start" },
  { name: "S", x: 226, y: 349, size: 24, anchor: "start" },
  { name: "cos", x: 353, y: 349, size: 24, anchor: "end" },
  { name: "erne", x: 32, y: 388, size: 20, anchor: "end", dot: [2, 398, 3] },
  { name: "New Brau", x: 146, y: 424, size: 24, anchor: "start", dot: [222, 436, 4] },
  { name: "Seguin", x: 280, y: 482, size: 24, dot: [280, 492, 3] },
  { name: "San Antonio", x: 87, y: 538, size: 30, bold: true, dot: [88, 553, 6] },
  { name: "Gonzales", x: 466, y: 511, size: 22, dot: [467, 520, 3] },
  { name: "Shiner", x: 570, y: 542, size: 20, dot: [570, 551, 3] },
  { name: "Floresville", x: 210, y: 665, size: 20, dot: [211, 674, 3] },
  { name: "Cuero", x: 526, y: 682, size: 20, dot: [526, 691, 3] },
  { name: "Pleasanton", x: 92, y: 734, size: 20, dot: [93, 743, 3] },
  { name: "Karnes City", x: 304, y: 768, size: 20, dot: [304, 777, 3] },
  { name: "Kenedy", x: 323, y: 828, size: 20, dot: [323, 805, 3] },
  { name: "Goliad", x: 489, y: 858, size: 20, dot: [490, 867, 3] },
  { name: "Three Rivers", x: 201, y: 945, size: 20, dot: [201, 954, 3] },
  { name: "Beeville", x: 359, y: 966, size: 22 },
  { name: "College Station", x: 873, y: 34, size: 26, dot: [874, 46, 4] },
  { name: "Navasota", x: 963, y: 139, size: 20, dot: [964, 148, 3] },
  { name: "Brenham", x: 850, y: 232, size: 20, dot: [851, 241, 3] },
  { name: "Round Top", x: 741, y: 275, size: 20 },
  { name: "La G", x: 632, y: 341, size: 20, anchor: "start" },
  { name: "The", x: 1174, y: 206, size: 24, anchor: "start" },
  { name: "odla", x: 1170, y: 231, size: 24, anchor: "start", dot: [1192, 242, 4] },
  { name: "Columbus", x: 798, y: 424, size: 20, dot: [799, 434, 3] },
  { name: "Katy", x: 1059, y: 392, size: 22, dot: [1060, 401, 3] },
  { name: "Ho", x: 1168, y: 398, size: 32, anchor: "start", bold: true },
  { name: "Sugar Land", x: 1130, y: 460, size: 24, dot: [1129, 471, 4] },
  { name: "El Campo", x: 898, y: 638, size: 22, dot: [898, 648, 3] },
  { name: "Edna", x: 761, y: 729, size: 22, dot: [760, 739, 3] },
  { name: "Bay City", x: 1006, y: 728, size: 22, dot: [1007, 737, 3] },
  { name: "Lake Ja", x: 1134, y: 706, size: 22, anchor: "start", dot: [1202, 716, 3] },
  { name: "Victoria", x: 630, y: 800, size: 24, dot: [630, 811, 4] },
  { name: "Port Lavaca", x: 768, y: 915, size: 22, dot: [768, 890, 3] },
  { name: "Port O'Connor", x: 848, y: 949, size: 20, dot: [848, 959, 3] },
];

const interstates: [string, number, number][] = [
  ["35", 323, 295],
  ["10", 28, 435],
  ["10", 517, 451],
  ["10", 870, 421],
  ["10", 1146, 403],
  ["45", 1175, 41],
  ["69", 1079, 505],
  ["37", 163, 843],
];

const usRoutes: [string, number, number][] = [
  ["281", 129, 162],
  ["79", 557, 51],
  ["290", 567, 215],
  ["0", -6, 217],
  ["77", 663, 289],
  ["281", 95, 603],
  ["183", 523, 635],
  ["87", 445, 644],
  ["59", 549, 855],
  ["183", 511, 945],
  ["90", 771, 512],
  ["90", 981, 506],
  ["", 1012, 278],
  ["77", 643, 594],
  ["87", 698, 861],
  ["77", 615, 887],
];

const routePath =
  "M88 553L92 547L106 546L119 540L125 547L167 533L197 522L249 501L276 482L319 474L340 471L386 457L420 456L453 458L508 451L536 443L555 440L611 437L668 440L696 441L798 441L810 433L833 427L937 408L951 405L994 405L1012 402L1123 402";

const US_SHIELD = "M-16 -15Q-13 -12 -9 -14L-6 -16Q-3 -13 0 -13Q3 -13 6 -16L9 -14Q13 -12 16 -15L20 -10Q16 -6 19 0Q22 10 14 12Q5 12 0 16Q-5 12 -14 12Q-22 10 -19 0Q-16 -6 -20 -10Z";

const Coast = () => (
  <g transform="translate(744 770) scale(.33333)">
    <path d="M1200 20L1230 100L1280 100L1392 55V-70L1340 -80V10L1345 30L1392 35L1330 70Z" fill="#c9dfaa" />
    <path
      fill="url(#sea)"
      d="M30 235L75 240L125 222L135 190L143 205L138 240L145 262L120 290L85 320L140 318L200 325L212 340L198 355L222 365L240 350L245 300L255 325L280 365L270 385L245 405L315 365L318 345L300 325L305 300L293 275L310 262L318 225L285 235L275 205L330 200L335 240L322 270L330 290L362 302L365 342L420 318L410 308L440 275L475 235L472 275L530 240L538 200L570 192L550 220L555 240L515 290L502 322L550 355L585 345L580 362L530 378L500 372L506 403L590 365L650 350L680 335L720 312L760 308L782 305L768 330L762 375L720 398L690 412L640 430L560 475L545 478L500 510L395 576H290L245 520L190 445L245 435L245 395L85 390L80 330L60 300L50 262ZM818 270L870 240L960 205L1030 190L1080 200L1115 172L1130 178L1085 215L1050 220L960 275L880 315L830 350L805 338ZM1145 132L1160 160L1150 168L1160 172L1120 182L1148 160ZM425 576L560 498L640 450L720 410L830 358L960 300L1060 240L1164 175L1230 102L1280 100L1392 55V576Z"
    />
    <path
      fill="#8bb4ff"
      d="M685 140L705 158L700 142L735 165V190L668 198L670 150ZM965 105L978 100L985 135L1003 150L1000 162L970 162ZM285 162L300 152L335 163L290 166ZM124 98L130 130L118 125ZM128 135L145 145L135 158ZM85 188L90 220L80 232ZM365 300L390 320L375 312ZM615 345L620 312L628 328L645 316L622 342ZM118 155L126 178L118 172ZM1265 50L1290 62L1270 70ZM1270 95L1315 68L1300 88ZM1335 25L1356 32L1338 40ZM170 242L176 290L172 265ZM922 200L934 198L926 190ZM740 280L765 265L748 285Z"
    />
  </g>
);

const BaseMap = () => (
  <svg viewBox="0 0 1208 962" preserveAspectRatio="xMidYMin slice" role="img" aria-label="Route from Houston to San Antonio" className="absolute inset-0 h-full w-full font-[Roboto,sans-serif]">
    <defs>
      <linearGradient id="sea" x1="0" y1="0" x2="1" y2="1">
        <stop offset="0" stopColor="#83afff" />
        <stop offset="0.5" stopColor="#a3c4ff" />
        <stop offset="1" stopColor="#b0d0ff" />
      </linearGradient>
      <linearGradient id="pinA" x1="0" y1="0" x2="0" y2="1">
        <stop offset="0" stopColor="#7cc83a" />
        <stop offset="1" stopColor="#5fb019" />
      </linearGradient>
      <linearGradient id="pinB" x1="0" y1="0" x2="0" y2="1">
        <stop offset="0" stopColor="#ff776b" />
        <stop offset="1" stopColor="#ee4237" />
      </linearGradient>
    </defs>
    <rect width="1208" height="962" fill="#f2f1ed" />
    <Coast />
    {tiles.map((t) => (
      <g key={t.transform} transform={t.transform}>
        <path d={t.town} fill="#dfdad2" />
        <path d={t.soft} fill="#d6e4cd" />
        <path d={t.park} fill="#c9dfaa" />
        <path d={t.water} fill="#8bb4ff" />
      </g>
    ))}
    <g fill="none" strokeLinejoin="round">
      {tiles.map((t) => (
        <path key={t.transform} transform={t.transform} d={t.minor} stroke="#cec7bc" strokeWidth="2" vectorEffect="non-scaling-stroke" />
      ))}
      {tiles.map((t) => (
        <path key={t.transform} transform={t.transform} d={t.road} stroke="#e3b94a" strokeWidth="5" vectorEffect="non-scaling-stroke" />
      ))}
      {tiles.map((t) => (
        <path key={t.transform} transform={t.transform} d={t.road} stroke="#fbdb5c" strokeWidth="2" vectorEffect="non-scaling-stroke" />
      ))}
      {tiles.map((t) => (
        <path key={t.transform} transform={t.transform} d={t.highway} stroke="#ee9300" strokeWidth="6" strokeLinecap="round" vectorEffect="non-scaling-stroke" />
      ))}
      {tiles.map((t) => (
        <path key={t.transform} transform={t.transform} d={t.highway} stroke="#ffa20a" strokeWidth="4" strokeLinecap="round" vectorEffect="non-scaling-stroke" />
      ))}
    </g>

    {usRoutes.map(([no, x, y]) => (
      <g key={`${no}-${x}`} transform={`translate(${x} ${y})`}>
        <path d={US_SHIELD} transform={no.length === 2 ? "scale(.92 1)" : undefined} fill="#fff" stroke="#686868" strokeWidth="2" />
        <text x={no.length === 1 ? 11 : 0} y="7" fontSize="19" textAnchor="middle" fill="#3c3c3c">
          {no}
        </text>
      </g>
    ))}
    {interstates.map(([no, x, y]) => (
      <g key={`${no}-${x}`} transform={`translate(${x} ${y})`}>
        <path d="M-15 -9H15Q20 11 0 17Q-20 11 -15 -9Z" fill="#3877cb" />
        <path d="M-15 -16L-11 -13L-7 -15L0 -12L7 -15L11 -13L15 -16L14 -10H-14Z" fill="#dd6059" />
        <text y="9" fontSize="18" fontWeight="700" textAnchor="middle" fill="#fff">
          {no}
        </text>
      </g>
    ))}

    <g stroke="#f7f6f3" strokeWidth="5" strokeOpacity="0.85" strokeLinejoin="round" className="[paint-order:stroke]">
      {places.map((p) => (
        <text
          key={p.name}
          x={p.x}
          y={p.y}
          fontSize={p.size}
          fontWeight={p.bold ? 500 : 400}
          textAnchor={p.anchor ?? "middle"}
          fill={p.size < 24 ? "#4a4536" : "#2f2f2d"}
        >
          {p.name}
        </text>
      ))}
      <text x="1097" y="85" fontSize="21" fontStyle="italic" fill="#3b7a2a">
        Sam Houston
      </text>
      <text x="1089" y="107" fontSize="21" fontStyle="italic" fill="#3b7a2a">
        National For
      </text>
    </g>
    {places.map((p) => p.dot && <circle key={p.name} cx={p.dot[0]} cy={p.dot[1]} r={p.dot[2]} fill="#fff" stroke={p.bold ? "#000" : "#555"} strokeWidth={p.bold ? 3 : 2} />)}
    <circle cx="1159" cy="6" r="3" fill="#fff" stroke="#555" strokeWidth="2" />

    <path d={routePath} fill="none" stroke="#0080ff" strokeOpacity="0.58" strokeWidth="14" strokeLinejoin="round" strokeLinecap="round" />
    <path d={routePath} fill="none" stroke="#6d8a96" strokeOpacity="0.9" strokeWidth="6" strokeLinejoin="round" />
    <g fontSize="28" fill="#333" textAnchor="middle">
      <path d="M88 552C86 522 66 512 66 493A22 22 0 0 1 110 493C110 512 90 522 88 552Z" fill="url(#pinB)" stroke="#b3271f" />
      <text x="88" y="507">
        B
      </text>
      <path d="M1125 405C1123 376 1103 366 1103 347A22 22 0 0 1 1147 347C1147 366 1127 376 1125 405Z" fill="url(#pinA)" stroke="#3f7d12" />
      <text x="1125" y="359">
        A
      </text>
    </g>
  </svg>
);

/* ----------------------------------------------------------- fuel markers */

const logos: Record<string, React.ReactNode> = {
  fuel: (
    <g fill="#0c1f73">
      <path d="M12 9Q12 5 16 5H33Q37 5 37 9V49H39V55H10V49H12ZM17 11V23H32V11Z" fillRule="evenodd" />
      <path d="M39 11L49 23V41Q49 47 44 47Q40 47 39 42Q39 34 37 33V30Q41 31 42 37Q42 44 44 44Q46 44 46 41V31L42 27V20L38 14Z" />
    </g>
  ),
  phillips: (
    <>
      <path d="M11 4Q15 7 20 5Q26 5 30 2Q34 5 40 5Q45 7 49 4L57 13Q51 20 56 32Q60 49 44 52Q35 53 30 57Q25 53 16 52Q0 49 4 32Q9 20 3 13Z" fill="#fff" stroke="#111" strokeWidth="2" />
      <path d="M8 22H52Q52 27 54 33Q56 46 43 49Q34 50 30 53Q26 50 17 49Q4 46 6 33Q8 27 8 22Z" fill="#d3201f" />
      <text x="30" y="20" fontSize="11" fontWeight="700" textAnchor="middle" fill="#111" fontFamily="Liberation Sans Narrow, Roboto">
        PHILLIPS
      </text>
      <text x="29" y="45" fontSize="27" fontWeight="700" fontStyle="italic" textAnchor="middle" fill="#fff" fontFamily="Open Sans">
        66
      </text>
    </>
  ),
  exxon: (
    <>
      <rect x="0.5" y="13.5" width="59" height="33" fill="#fff" stroke="#7f9fd0" />
      <rect x="2" y="37" width="56" height="7" fill="#2a5caa" />
      <g fill="#e4002b" fontSize="16" fontWeight="700" fontFamily="Liberation Sans">
        <text x="3" y="30">
          E
        </text>
        <text x="32" y="30">
          ON
        </text>
      </g>
      <path d="M14 19L25 30M25 19L17 34M22 19L34 34M33 19L22 34" stroke="#e4002b" strokeWidth="3" fill="none" />
    </>
  ),
  shell: (
    <>
      <path d="M30 3C46 2 59 16 59 33Q59 42 52 45L45 47L46 54H34L30 57L26 54H14L15 47L8 45Q1 42 1 33C1 16 14 2 30 3Z" fill="#ee1c1c" />
      <path d="M30 7C43 7 55 18 55 32Q55 39 49 41L41 44L42 50H33L30 52L27 50H18L19 44L11 41Q5 39 5 32C5 18 17 7 30 7Z" fill="#ffd500" />
      <path d="M30 42V8M28 42L20 10M32 42L40 10M26 43L11 17M34 43L49 17M24 44L6 28M36 44L54 28" stroke="#ee1c1c" fill="none" />
    </>
  ),
  conoco: (
    <>
      <rect x="1" y="21" width="58" height="18" rx="9" fill="#fff" stroke="#f01414" strokeWidth="2" />
      <rect x="4" y="24" width="52" height="12" rx="6" fill="#fff" stroke="#f01414" />
      <text x="30" y="34" fontSize="13" fontWeight="700" textAnchor="middle" fill="#e80f0f" fontFamily="Lato">
        conoco
      </text>
    </>
  ),
  loves: (
    <>
      <rect x="7" y="22" width="46" height="35" fill="#fff200" stroke="#111" strokeWidth="2" />
      <path d="M26 32L11 19Q8 11 14 8Q16 4 21 5Q26 1 31 6Q37 -1 44 3Q53 9 46 19L30 34Z" fill="#ffd21f" stroke="#111" strokeWidth="2" />
      <path d="M27 32L14 19Q11 12 17 8M29 31L18 18Q15 11 21 6" stroke="#e3552a" strokeWidth="2" fill="none" />
      <path d="M30 32L21 17Q17 6 25 4Q30 3 33 8Q38 0 44 4Q52 10 46 18Z" fill="#f11307" stroke="#111" />
      <path d="M40 29L38 27Q40 25 40 27Q41 25 43 27Z" fill="#f11307" stroke="#f11307" />
      <g textAnchor="middle" fontWeight="700" fill="#111">
        <text x="30" y="43" fontSize="14" fontFamily="Lato">
          Love's
        </text>
        <text x="30" y="49" fontSize="5" fontFamily="Liberation Serif">
          Travel Stops &amp;
        </text>
        <text x="30" y="54" fontSize="5" fontFamily="Liberation Serif">
          Country Stores
        </text>
      </g>
    </>
  ),
  raceway: (
    <>
      <path d="M1 33L6 26H59L54 33Z" fill="#9db9e2" />
      <text x="30" y="33" fontSize="10" fontWeight="700" fontStyle="italic" textAnchor="middle" fill="#2f62b0" stroke="#fff" strokeWidth="1" className="[paint-order:stroke]" fontFamily="Liberation Serif">
        RACEWAY
      </text>
    </>
  ),
};

const tones = {
  plain: "border-black bg-white text-black",
  info: "border-[#31708f] bg-[#d9edf7] font-bold text-[#31708f]",
  warning: "border-[#faebcc] bg-[#fcf8e3] font-bold text-[#8a6d3b]",
};

const stations: { brand: string; price: string; tone: keyof typeof tones; x: number; y: number }[] = [
  { brand: "fuel", price: "$ 1.83", tone: "plain", x: 108, y: 524 },
  { brand: "phillips", price: "$ 1.94", tone: "info", x: 280, y: 478 },
  { brand: "exxon", price: "$ 2.08", tone: "info", x: 594, y: 440 },
  { brand: "shell", price: "$ 2.00", tone: "warning", x: 712, y: 440 },
  { brand: "conoco", price: "$ 1.98", tone: "info", x: 798, y: 442 },
  { brand: "exxon", price: "$ 1.90", tone: "plain", x: 938, y: 408 },
  { brand: "loves", price: "$ 1.96", tone: "plain", x: 1038, y: 404 },
  { brand: "raceway", price: "$ 1.73", tone: "plain", x: 1136, y: 346 },
];

const RouteMap = () => (
  <div className="relative h-[962px] overflow-hidden font-[Roboto,sans-serif]">
    <BaseMap />
    {stations.map((s) => (
      <div key={s.price} className="absolute flex -translate-x-1/2 -translate-y-full flex-col items-center" style={{ left: s.x, top: s.y }}>
        <div className={`flex h-[120px] w-20 flex-col items-center rounded-[10px] border-2 pt-[10px] text-[22px] leading-[26px] whitespace-nowrap ${tones[s.tone]}`}>
          <svg viewBox="0 0 60 60" aria-label={s.brand} role="img" className="mb-[15px] h-[60px] w-[60px] shrink-0">
            {logos[s.brand]}
          </svg>
          {s.price}
        </div>
        <div className="h-10 w-[2px] bg-black" />
      </div>
    ))}

    <div className="absolute top-5 left-5 flex h-[62px] rounded-[4px] bg-white text-[22px] shadow-[0_2px_8px_rgba(0,0,0,0.3)]">
      <button type="button" className="w-[74px] border-r border-[#e2e2e2] font-medium text-black">
        Map
      </button>
      <button type="button" className="w-28 text-[#565656]">
        Satellite
      </button>
    </div>

    <button type="button" aria-label="Street View" className="absolute top-[728px] right-5 flex h-14 w-14 items-center justify-center rounded-[4px] bg-white shadow-[0_2px_8px_rgba(0,0,0,0.3)]">
      <svg viewBox="0 0 24 40" className="h-10 w-6" fill="#fbbc05" stroke="#8d7433">
        <path d="M6 13H18Q21 18 22 26L19 28L17 23V38H13V28H11V38H7V23L5 28L2 26Q3 18 6 13Z" />
        <circle cx="12" cy="7" r="6" />
        <path d="M8 14H16L12 21Z" fill="#e5852b" stroke="none" />
      </svg>
    </button>
    <div className="absolute top-[804px] right-5 flex h-[110px] w-14 flex-col items-center rounded-[4px] bg-white shadow-[0_2px_8px_rgba(0,0,0,0.3)]">
      <button type="button" aria-label="Zoom in" className="flex w-10 flex-1 items-center justify-center border-b-2 border-[#e6e6e6]">
        <svg viewBox="0 0 20 20" className="h-5 w-5" stroke="#666" strokeWidth="5">
          <path d="M0 10H20M10 0V20" />
        </svg>
      </button>
      <button type="button" aria-label="Zoom out" className="flex w-10 flex-1 items-center justify-center">
        <svg viewBox="0 0 20 20" className="h-5 w-5" stroke="#666" strokeWidth="5">
          <path d="M0 10H20" />
        </svg>
      </button>
    </div>

    <svg viewBox="0 0 140 50" role="img" aria-label="Google" className="absolute bottom-0 left-2 h-[50px] w-[140px]">
      <text x="4" y="34" fontSize="40" fontFamily="Lato" fontWeight="500" stroke="#fff" strokeWidth="4" className="[paint-order:stroke]">
        <tspan fill="#4285f4">G</tspan>
        <tspan fill="#ea4335">o</tspan>
        <tspan fill="#fbbc05">o</tspan>
        <tspan fill="#4285f4">g</tspan>
        <tspan fill="#34a853">l</tspan>
        <tspan fill="#ea4335">e</tspan>
      </text>
    </svg>
    <div className="absolute right-0 bottom-0 flex h-7 text-[20px] leading-7 text-[#444444]">
      <span className="bg-[#f5f5f5]/70 px-[10px]">Map data ©2016 Google, INEGI</span>
      <a href="#" className="ml-[2px] bg-[#f5f5f5]/70 px-3">
        Terms of Use
      </a>
      <a href="#" className="ml-[2px] bg-[#f5f5f5]/70 px-3">
        Report a map error
      </a>
    </div>
  </div>
);

const RoutePanel = () => (
  <section className="border-t-[6px] border-[#e7eaec] bg-white">
    <div className="flex h-[92px] items-center justify-between border-b-2 border-[#e7eaec] pr-8 pb-1 pl-[30px]">
      <h2 className="text-[28px] font-semibold">Route</h2>
      <button type="button" aria-label="Collapse Route" className="pt-2 text-[#c4c4c4]">
        <Icon name="chevronUp" />
      </button>
    </div>
    <div className="px-10 pt-[30px] pb-10">
      <RouteMap />
    </div>
  </section>
);

export default function App() {
  return (
    <div className="relative flex h-screen overflow-hidden bg-[#f3f3f4] font-['Open_Sans',sans-serif] text-[#676a6c]">
      <Sidebar />
      <main className="min-w-0 flex-1">
        <TopBar />
        <PageHeading />
        <div className="flex items-start px-5 pt-10">
          <div className="w-5/12 px-[30px]">
            <PlanRoute />
            <section className="mt-[50px] h-24 border-t-[6px] border-[#e7eaec] bg-white" />
          </div>
          <div className="w-7/12 px-[30px]">
            <RoutePanel />
          </div>
        </div>
      </main>
      {/* edge of the window behind */}
      <div className="flex w-[7px] shrink-0 flex-col border-l border-[#8c8c8c] bg-[#c4c4c4]">
        <div className="h-[42px] bg-[#943127]" />
        <div className="h-[134px] border-b-2 border-[#a5a5a5]" />
        <div className="h-[46px] border-b-2 border-[#a5a5a5]" />
        <div className="h-12 border-b-2 border-[#8f8f8f]" />
        <div className="mt-1 h-9 bg-[#a9a9a9]" />
      </div>
      <div className="pointer-events-none absolute inset-x-0 bottom-0 h-14 bg-linear-to-t from-black/6 to-transparent" />
    </div>
  );
}
